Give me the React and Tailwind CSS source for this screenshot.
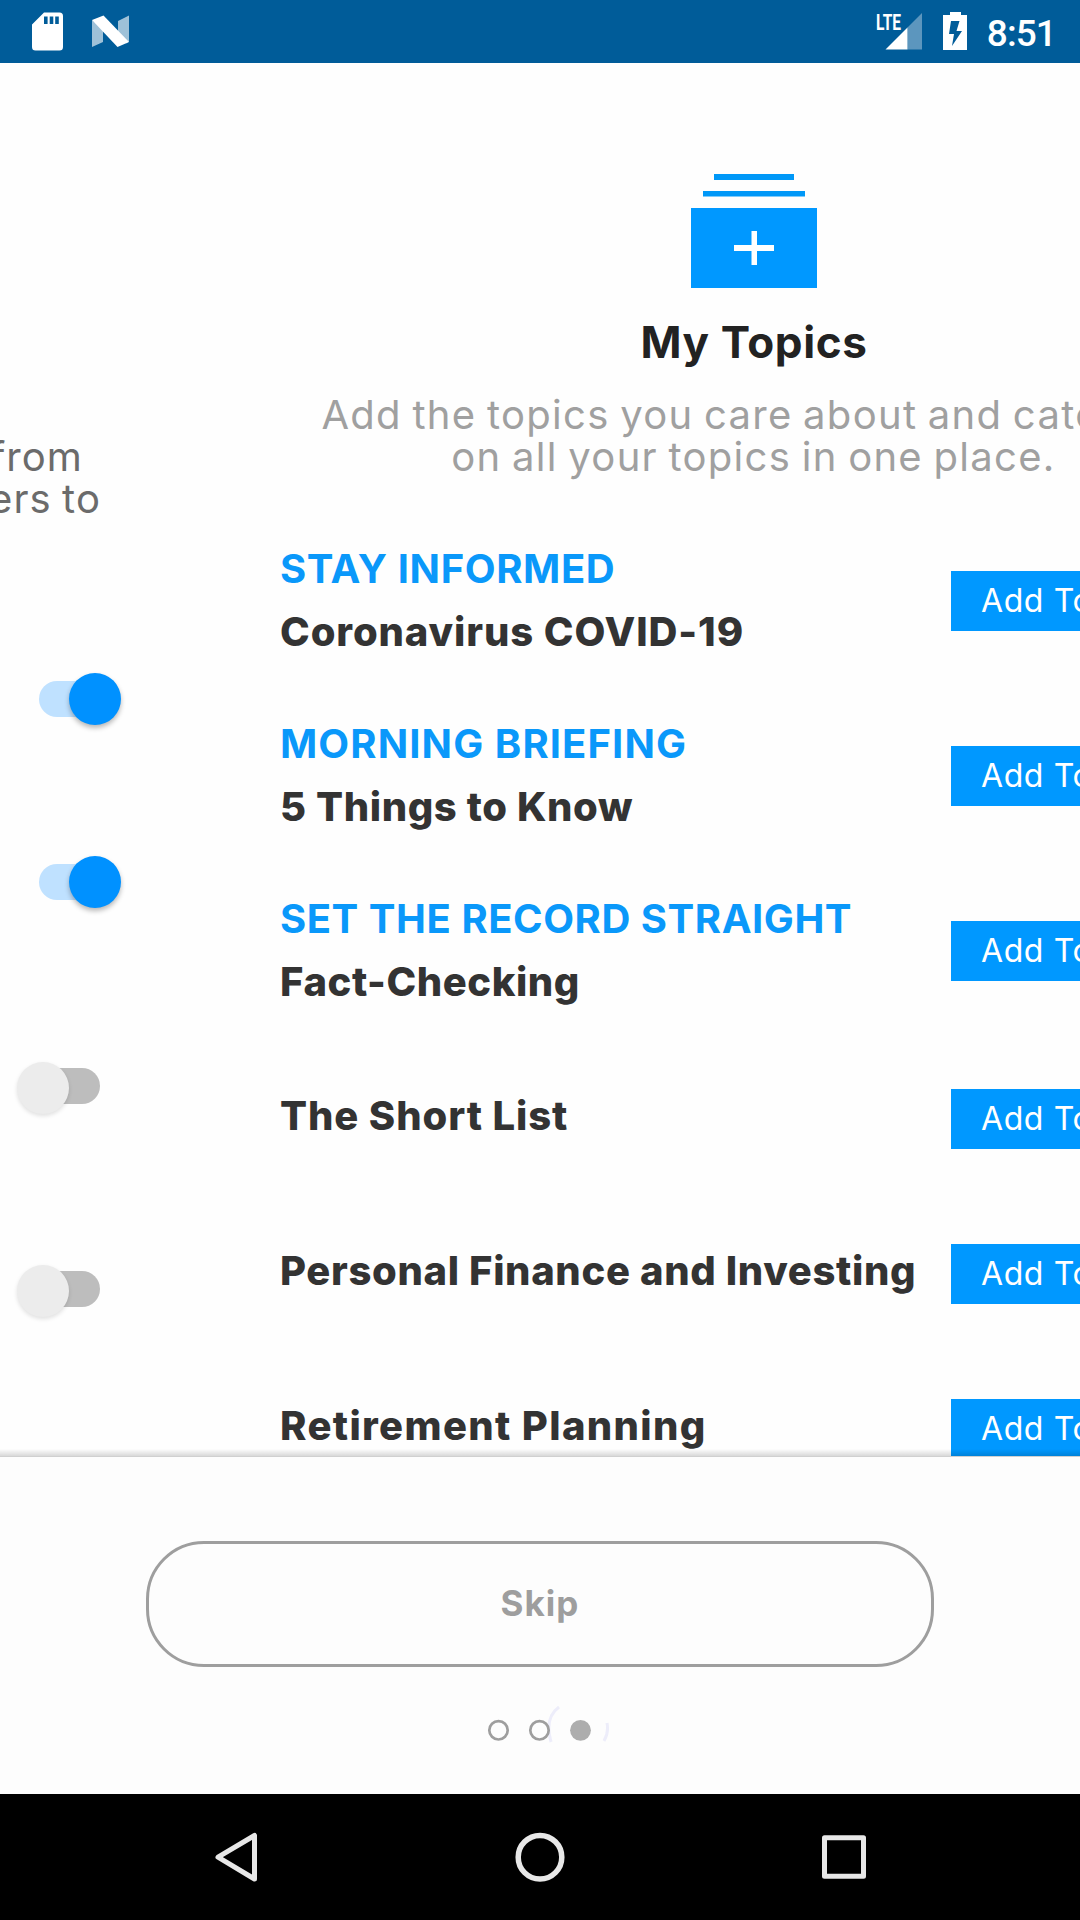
const topics = [
  { label: "STAY INFORMED", labelTrack: "tracking-[0.6px]", title: "Coronavirus COVID-19", track: "tracking-[0.9px]" },
  { label: "MORNING BRIEFING", labelTrack: "tracking-[1.1px]", title: "5 Things to Know", track: "tracking-[0.6px]" },
  { label: "SET THE RECORD STRAIGHT", labelTrack: "tracking-[0.55px]", title: "Fact-Checking", track: "tracking-[0.55px]" },
  { title: "The Short List", track: "tracking-[0.9px]" },
  { title: "Personal Finance and Investing", track: "tracking-[0.65px]" },
  { title: "Retirement Planning", track: "tracking-[1.35px]" },
];

function StatusBar() {
  return (
    <header className="flex h-[63px] shrink-0 items-start bg-[#005c99] text-white">
      <svg className="mt-3 ml-8 h-[39px] w-[31px]" viewBox="0 0 31 39" fill="currentColor">
        <path fillRule="evenodd" d="M12 .5h15.5a3.5 3.5 0 0 1 3.5 3.5v31a3.5 3.5 0 0 1-3.5 3.5h-24A3.5 3.5 0 0 1 0 35V12.500zM12 4.500v7.500h3.600v-7.500zM17.700 4.500v7.500h3.600v-7.500zM23.200 4.500v7.500h3.600v-7.500z" />
      </svg>
      <svg className="mt-[15px] ml-7 h-[33px] w-[39px]" viewBox="0 0 39 33" fill="currentColor">
        <path opacity=".62" d="M1 5v27l11-5V14zM38 .5v26l-3 2-8-9V6z" />
        <path d="M1 5 12.500 .5 38 27l-11.500 5z" />
      </svg>
      <div className="grow" />
      <svg className="mt-3 h-[39px] w-[48px]" viewBox="0 0 48 39" fill="currentColor">
        <path d="M11.500 37.500 33.500 15.500v22z" />
        <path opacity=".36" d="M33.500 15.500 48 1v36.500H33.500z" />
        <text x="2" y="17.500" fontSize="22.500" fontWeight="700" textLength="25" lengthAdjust="spacingAndGlyphs" fontFamily="Roboto, sans-serif">LTE</text>
      </svg>
      <svg className="mt-3 ml-[21px] h-[38px] w-[24px]" viewBox="0 0 24 38" fill="currentColor">
        <path fillRule="evenodd" d="M7 0h11v3h6v35H0V3h7zM8 9 6 22h5L9 34l10-15h-5.500L16.500 9z" />
      </svg>
      <div className="mt-3 mr-6 ml-[20px] font-[Roboto,sans-serif] text-[37px] leading-[43px] font-medium tracking-[-0.9px]">8:51</div>
    </header>
  );
}

function Toggle({ on }) {
  return on ? (
    <div className="flex h-[52px] w-[121px] items-center justify-end">
      <div className="-mr-[26px] h-9 w-[56px] rounded-full bg-[#bfe1ff]" />
      <div className="relative size-[52px] rounded-full bg-[#0091ff] shadow-[0_3px_5px_rgba(0,0,0,0.28)]" />
    </div>
  ) : (
    <div className="flex h-[52px] items-center pl-[17px]">
      <div className="relative size-[52px] rounded-full bg-[#ececec] shadow-[0_2px_4px_rgba(0,0,0,0.12)]" />
      <div className="-mt-[5px] -ml-[25px] h-9 w-[56px] rounded-full bg-[#bdbdbd]" />
    </div>
  );
}

function SettingsPage() {
  return (
    <section className="w-[213px] shrink-0 pt-[373px]">
      <div className="text-[40px] leading-[42px] tracking-[1.1px] whitespace-nowrap text-[#6b6b6b] [word-spacing:-2px]">
        <div className="flex w-[83px] justify-end overflow-hidden"><span>from</span></div>
        <div className="flex w-[101px] justify-end overflow-hidden"><span>ers to</span></div>
      </div>
      <div className="mt-[153px]"><Toggle on /></div>
      <div className="mt-[131px]"><Toggle on /></div>
      <div className="mt-[154px]"><Toggle /></div>
      <div className="mt-[151px]"><Toggle /></div>
    </section>
  );
}

function TopicRow({ topic }) {
  return (
    <li className={topic.label ? "flex h-[175px] items-start" : "flex h-[155px] items-start"}>
      <div className={topic.label ? "w-[671px] pt-[29px] text-[40px] leading-[53px] font-bold whitespace-nowrap" : "w-[671px] pt-[51px] text-[40px] leading-[53px] font-bold whitespace-nowrap"}>
        {topic.label && <div className={"mb-[10px] text-[#0a98fa] " + topic.labelTrack}>{topic.label}</div>}
        <div className={"font-extrabold text-[#333333] " + topic.track}>{topic.title}</div>
      </div>
      <button className={(topic.label ? "mt-[58px]" : "mt-[51px]") + " h-[60px] w-[240px] bg-[#0098ff] pl-[30px] text-left text-[32px] leading-[58px] tracking-[0.6px] whitespace-nowrap text-white"}>
        Add Topic
      </button>
    </li>
  );
}

function TopicsPage() {
  return (
    <section className="flex w-[1080px] shrink-0 flex-col pt-[111px]">
      <svg className="ml-px h-[114px] w-[126px] shrink-0 self-center" viewBox="0 0 126 114">
        <path fill="#0098f8" d="M23 0h80v6H23zM12 17h102v5.500H12z" />
        <path fill="#0098ff" d="M0 34h126v80H0z" />
        <path fill="#fff" d="M43 71h40v6H43zM60.500 57h5.500v34h-5.500z" />
      </svg>
      <h1 className="mt-[24px] pl-[2px] text-center text-[44px] leading-[60px] font-bold tracking-[0.6px] text-[#222222]">My Topics</h1>
      <p className="mt-[22px] pl-px text-center text-[40px] leading-[42px] tracking-[1.3px] text-[#a0a0a0] [word-spacing:-2px]">
        Add the topics you care about and catch up
        <br />
        on all your topics in one place.
      </p>
      <ul className="mt-[35px] pl-[67px]">
        {topics.map((topic) => (
          <TopicRow key={topic.title} topic={topic} />
        ))}
      </ul>
    </section>
  );
}

function NavBar() {
  return (
    <nav className="flex h-[126px] shrink-0 items-center justify-between bg-black px-[212px]">
      <svg className="h-[60px] w-[48px]" viewBox="0 0 48 60" fill="none" stroke="#e8e8e8" strokeWidth="5" strokeLinejoin="round">
        <path d="M42.500 8.500v43.500L6 30.200z" />
      </svg>
      <svg className="h-[60px] w-[50px]" viewBox="0 0 50 60" fill="none" stroke="#e8e8e8" strokeWidth="5.500">
        <circle cx="25" cy="30.200" r="21.800" />
      </svg>
      <svg className="h-[60px] w-[48px]" viewBox="0 0 48 60" fill="none" stroke="#e8e8e8" strokeWidth="5" strokeLinejoin="round">
        <path d="M4.500 10.700h39v38.500h-39z" />
      </svg>
    </nav>
  );
}

export default function App() {
  return (
    <div className="flex h-[1920px] w-[1080px] flex-col overflow-hidden bg-[#fdfdfd] font-[Inter,sans-serif]">
      <StatusBar />
      <main className="relative flex h-[1394px] shrink-0 overflow-hidden bg-[#fefefe]">
        <SettingsPage />
        <TopicsPage />
        <div className="absolute inset-x-0 bottom-0 h-2 border-b border-[#d0d0d0] bg-linear-to-b from-transparent to-black/15" />
      </main>
      <footer className="flex h-[337px] shrink-0 flex-col items-center bg-[#fdfdfd] pt-[84px]">
        <button className="h-[126px] w-[788px] rounded-[58px] border-[3px] border-[#9e9e9e] pb-[3px] text-[35px] leading-[48px] font-bold tracking-[1px] text-[#9e9e9e]">Skip</button>
        <svg className="mt-[31px] h-[64px] w-[140px]" viewBox="0 0 140 64" fill="none">
          <path d="M89 9Q74 20 81 44M137 25q2 9-3 18" stroke="#ededfa" strokeWidth="3" />
          <circle cx="28.500" cy="32.300" r="9.200" stroke="#9e9e9e" strokeWidth="2.700" />
          <circle cx="69.500" cy="32.300" r="9.200" stroke="#9e9e9e" strokeWidth="2.700" />
          <circle cx="110.500" cy="32.300" r="10.400" fill="#adadad" />
        </svg>
      </footer>
      <NavBar />
    </div>
  );
}
